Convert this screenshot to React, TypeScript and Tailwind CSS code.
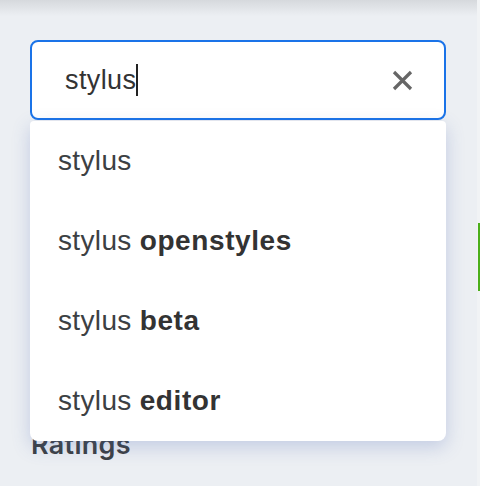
import React from "react";

const suggestions: { base: string; rest?: string }[] = [
  { base: "stylus" },
  { base: "stylus", rest: "openstyles" },
  { base: "stylus", rest: "beta" },
  { base: "stylus", rest: "editor" },
];

const App = () => {
  return (
    <div className="flex w-[480px] h-[486px] overflow-hidden bg-[#eceff3] font-['Liberation_Sans',Arial,sans-serif]">
      <div className="relative flex-1 flex flex-col">
        <div className="h-4 bg-gradient-to-b from-[#d6d9dd] to-[#eceff3]" />

        <div className="relative ml-[30px] mt-6 w-[416px]">
          <div className="flex items-center h-[80px] bg-white border-2 border-[#1a73e8] rounded-lg pl-[33px] pr-[32px]">
            <div className="flex-1 flex items-center text-[27px] tracking-[0.4px] text-[#333]">
              <span>stylus</span>
              <span className="w-[2px] h-[32px] bg-[#222]" />
            </div>
            <svg width="21" height="21" viewBox="0 0 21 21" className="text-[#666] -mr-[1px]">
              <path d="M2 2 L19 19 M19 2 L2 19" stroke="currentColor" strokeWidth="3.2" />
            </svg>
          </div>

          <div className="absolute left-0 top-[81px] z-10 w-[416px] bg-white rounded-b-lg rounded-t-sm shadow-[0_6px_18px_rgba(70,100,180,0.25)]">
            {suggestions.map((s, i) => (
              <div key={i} className="h-[80px] flex items-center pl-[28px] text-[28px] tracking-[0.35px] text-[#3c4043]">
                <span>{s.base}</span>
                {s.rest && <b className="ml-[8px] font-bold tracking-[0.6px] text-[#333]">{s.rest}</b>}
              </div>
            ))}
          </div>
        </div>

        <div className="ml-[31px] mt-[305px] text-[27px] font-semibold tracking-[0.3px] text-[#3c4043] font-['Inter',sans-serif]">
          Ratings
        </div>
      </div>

      <div className="w-[3px] bg-[#f1f3f5] flex flex-col">
        <div className="h-[223px]" />
        <div className="ml-[1px] w-[2px] h-[68px] bg-[#4caf1a]" />
      </div>
    </div>
  );
};

export default App;
